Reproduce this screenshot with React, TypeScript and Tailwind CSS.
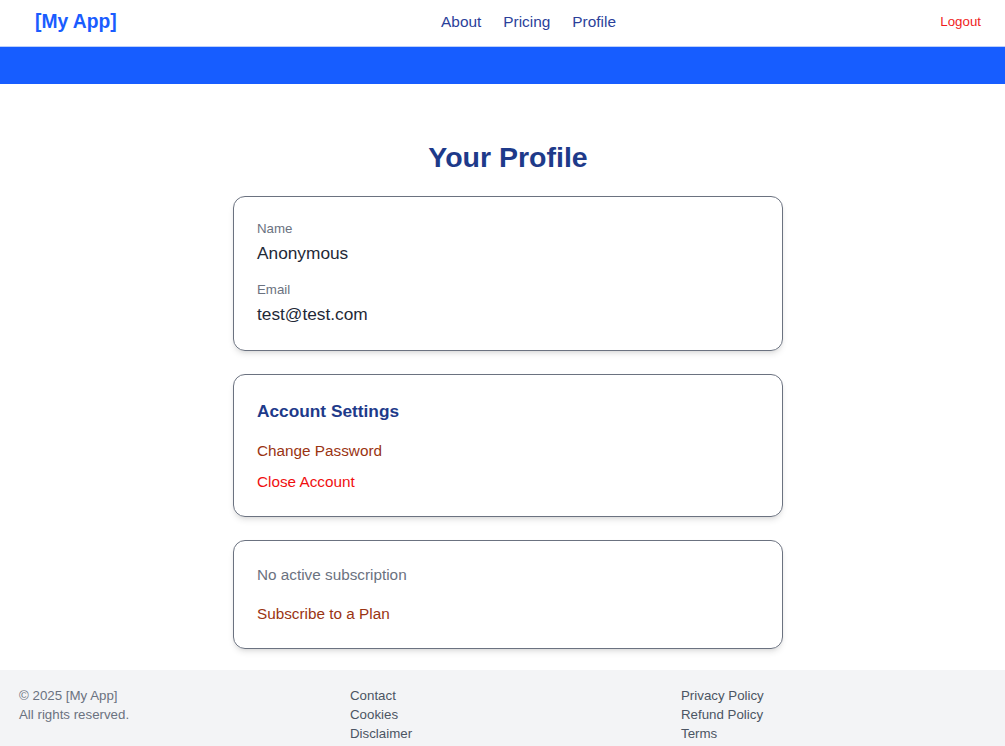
import React from "react";

export default function App() {
  return (
    <div className="min-h-screen bg-white font-['Liberation_Sans',Arial,sans-serif]">
      <header className="h-[47px] pb-[2px] flex items-center justify-between pl-[35px] pr-[24px] border-b border-[#bcd0fb]">
        <a className="text-[19.3px] font-bold text-[#1a5cff] leading-[24px]">[My App]</a>
        <nav className="flex items-center gap-[22px] text-[15.4px] text-[#2b3f9a]">
          <a>About</a>
          <a>Pricing</a>
          <a>Profile</a>
        </nav>
        <a className="text-[13.3px] text-[#ef1c1c]">Logout</a>
      </header>
      <div className="h-[37px] bg-[#175dff]" />
      <main className="pl-[11px] pt-[56px] pb-[21px] flex flex-col items-center">
        <h1 className="text-[28.5px] leading-[34px] font-bold text-[#1e3a8a]">Your Profile</h1>
        <div className="mt-[22px] w-[550px] flex flex-col gap-[23px]">
          <section className="border border-[#6b7280] rounded-xl shadow-md p-[23px] flex flex-col">
            <div className="text-[13.3px] leading-[18px] text-[#6b7280]">Name</div>
            <div className="mt-[3px] text-[17.3px] leading-[24px] text-[#1f2937]">Anonymous</div>
            <div className="mt-[16px] text-[13.3px] leading-[18px] text-[#6b7280]">Email</div>
            <div className="mt-[3px] text-[17.3px] leading-[25px] text-[#1f2937]">test@test.com</div>
          </section>
          <section className="border border-[#6b7280] rounded-xl shadow-md p-[23px] flex flex-col">
            <h2 className="text-[17.3px] leading-[26px] font-bold text-[#1e3a8a]">Account Settings</h2>
            <a className="mt-[16px] text-[15.3px] leading-[22px] text-[#9a3412]">Change Password</a>
            <a className="mt-[9px] text-[15.3px] leading-[22px] text-[#f00f0f]">Close Account</a>
          </section>
          <section className="border border-[#6b7280] rounded-xl shadow-md p-[23px] flex flex-col">
            <p className="text-[15.3px] leading-[22px] text-[#6b7280]">No active subscription</p>
            <a className="mt-[17px] text-[15.3px] leading-[22px] text-[#9a3412]">Subscribe to a Plan</a>
          </section>
        </div>
      </main>
      <footer className="bg-[#f3f4f6] pl-[19px] pt-[16px] pb-[16px] grid grid-cols-[331px_331px_1fr] text-[13.3px] leading-[19px]">
        <div className="text-[#6b7280] flex flex-col">
          <span>© 2025 [My App]</span>
          <span>All rights reserved.</span>
        </div>
        <div className="text-[#4b5563] flex flex-col">
          <a>Contact</a>
          <a>Cookies</a>
          <a>Disclaimer</a>
        </div>
        <div className="text-[#4b5563] flex flex-col">
          <a>Privacy Policy</a>
          <a>Refund Policy</a>
          <a>Terms</a>
        </div>
      </footer>
    </div>
  );
}
